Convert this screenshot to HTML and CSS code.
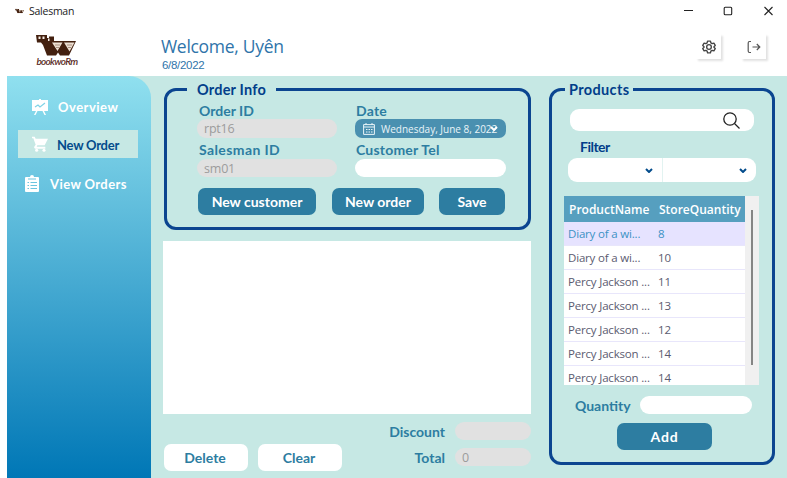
FILE: index.html
```html
<!DOCTYPE html>
<html lang="en">
<head>
<meta charset="utf-8">
<title>Salesman</title>
<link rel="stylesheet" href="styles.css">
</head>
<body>
<svg class="defs" width="0" height="0">
  <symbol id="mark" viewBox="0 0 40 21">
    <path fill="#43200f" d="M0 0h11v3h2V1.500h5V6h22l-7 14.500h-9l-2-3-2 3H11L7 10 5 7.500H1z"/>
    <path fill="#f7eee6" d="M2.500 1.500h2V4h-2zM6.500 1.500h2V4h-2zM12 3.500h1.500V6H12z"/>
    <path fill="#ecdfd2" d="M16 7.500h10.500l-5 8.500zM28 7.500h10.500l-5 9z"/>
    <path stroke="#7c5a46" stroke-width=".6" d="M19 10h5M20 12.500h3M31 10h5M32 12.500h3"/>
  </symbol>
</svg>
<header class="titlebar">
  <svg class="app-icon" viewBox="0 0 40 21"><use href="#mark"/></svg>
  <span class="app-name">Salesman</span>
  <svg class="win-controls" viewBox="0 0 90 12" fill="none" stroke="#222" stroke-width="1.100">
    <path d="M1 5.500h9M81.500 2l8 8M89.500 2l-8 8"/><rect x="41.200" y="2.200" width="7.500" height="7.500" rx="1"/>
  </svg>
</header>
<section class="banner">
  <div class="logo"><svg viewBox="0 0 40 21"><use href="#mark"/></svg><span>bookwoRm</span></div>
  <div class="greeting"><h1>Welcome, Uyên</h1><p>6/8/2022</p></div>
  <div class="tools">
    <button class="tool"><svg viewBox="0 0 24 24" fill="none" stroke="#444" stroke-width="2.300" stroke-linejoin="round"><circle cx="12" cy="12" r="4"/><path d="M9.500 2h5l.7 3 2.200 1.200 3-.9 2.300 4-2.200 2.200v1l2.200 2.200-2.300 4-3-.9-2.200 1.200-.7 3h-5l-.7-3-2.200-1.200-3 .9-2.300-4 2.200-2.200v-1L1.300 9.300l2.300-4 3 .9L8.800 5z"/></svg></button>
    <button class="tool"><svg viewBox="0 0 14 14" fill="none" stroke="#555" stroke-width="1.200"><path d="M4 1.500H2.500Q1.200 1.500 1.200 3v8q0 1.500 1.300 1.500H4M5.500 7h7M9.800 4l3 3-3 3"/></svg></button>
  </div>
</section>
<div class="workspace">
  <nav class="sidebar">
    <a class="item overview"><svg viewBox="0 0 16 16"><path fill="#fff" d="M0 1h7V0h2v1h7v11h-4l2 4h-1.500l-2-4h-5l-2 4H2l2-4H0z"/><path d="M3 8l3-2 2 2 5-4" fill="none" stroke="#80d3e6" stroke-width="1.200"/></svg><span>Overview</span></a>
    <a class="item current"><svg viewBox="0 0 24 24" fill="#fff"><path d="M0 1h4l1.500 3H24l-5 10H8l-1 2h13v3H5q-3-1-1-4l1.500-2L2 3.500H0z"/><circle cx="7" cy="21.500" r="2.300"/><circle cx="18" cy="21.500" r="2.300"/></svg><span>New Order</span></a>
    <a class="item view"><svg viewBox="0 0 14 17"><path fill="#fff" d="M1 2h4q0-2 2-2t2 2h4q1 0 1 1v13q0 1-1 1H1q-1 0-1-1V3q0-1 1-1z"/><path d="M3 4h8M2.500 7.500H4M5.500 7.500H12M2.500 10.500H4M5.500 10.500H12M2.500 13.500H4M5.500 13.500H12" stroke="#6cc5df" stroke-width="1"/></svg><span>View Orders</span></a>
  </nav>
  <main class="order">
    <fieldset class="panel info">
      <legend>Order Info</legend>
      <div class="fields">
        <label class="field"><span>Order ID</span><span class="box off">rpt16</span></label>
        <label class="field"><span>Date</span><span class="box date"><svg viewBox="0 0 12 12" fill="none" stroke="#e9f4f8"><path d="M.6 1.600h10.800v9.800H.6zM.6 4h10.800M3 0v2M9 0v2"/><path d="M3 6.500h6.500M3 9h6.500" stroke-dasharray="1.500 1"/></svg><span class="date-text">Wednesday, June 8, 2022</span><svg class="caret" viewBox="0 0 8 5"><path d="M1 1l3 3 3-3"/></svg></span></label>
        <label class="field"><span class="wide">Salesman ID</span><span class="box off">sm01</span></label>
        <label class="field"><span>Customer Tel</span><span class="box"></span></label>
      </div>
      <div class="actions"><button class="btn b1">New customer</button><button class="btn b2">New order</button><button class="btn b3">Save</button></div>
    </fieldset>
    <div class="lines"></div>
    <footer class="summary">
      <div class="edit"><button class="btn light">Delete</button><button class="btn light">Clear</button></div>
      <div class="totals"><span>Discount</span><span class="box off"></span><span>Total</span><span class="box off">0</span></div>
    </footer>
  </main>
  <aside>
    <fieldset class="panel products">
      <legend>Products</legend>
      <div class="search"><svg viewBox="0 0 17 17" fill="none" stroke="#222" stroke-width="1.300"><circle cx="7" cy="7" r="6.200"/><path d="M11.500 11.500l5 5"/></svg></div>
      <div class="filter-label">Filter</div>
      <div class="filters"><span><svg class="caret" viewBox="0 0 8 5"><path d="M1 1l3 3 3-3"/></svg></span><span><svg class="caret" viewBox="0 0 8 5"><path d="M1 1l3 3 3-3"/></svg></span></div>
      <div class="grid">
        <div class="rows">
          <div class="row head"><span>ProductName</span><span>StoreQuantity</span></div>
          <div class="row picked"><span>Diary of a wi...</span><span>8</span></div>
          <div class="row"><span>Diary of a wi...</span><span>10</span></div>
          <div class="row"><span>Percy Jackson ...</span><span>11</span></div>
          <div class="row"><span>Percy Jackson ...</span><span>13</span></div>
          <div class="row"><span>Percy Jackson ...</span><span>12</span></div>
          <div class="row"><span>Percy Jackson ...</span><span>14</span></div>
          <div class="row"><span>Percy Jackson ...</span><span>14</span></div>
        </div>
        <div class="scroll"><div class="thumb"></div></div>
      </div>
      <div class="quantity"><span>Quantity</span><span class="box"></span></div>
      <button class="btn add">Add</button>
    </fieldset>
  </aside>
</div>
</body>
</html>
```
FILE: styles.css
```css
* { box-sizing: border-box; }
body { margin: 0; width: 787px; height: 478px; overflow: hidden; background: #fff; font-family: "Open Sans", "Noto Sans", sans-serif; }
button { font: inherit; border: 0; padding: 0; }
.defs { display: block; }
.titlebar { display: flex; align-items: center; height: 22px; padding: 0 14px 0 15px; }
.app-icon { width: 9px; height: 6px; }
.app-name { margin-left: 5px; font-size: 10.500px; line-height: 20px; color: #222; letter-spacing: -.25px; }
.win-controls { width: 90px; height: 12px; margin-left: auto; }
.banner { display: flex; height: 54px; padding-left: 34px; }
.logo { width: 46px; padding-top: 13px; text-align: center; }
.logo svg { display: block; width: 40px; height: 21px; margin-left: 2px; }
.logo span { display: block; font: italic 600 10px/11px Lato, sans-serif; color: #5a2b24; letter-spacing: -.7px; white-space: nowrap; }
.greeting { margin-left: 81px; padding-top: 12px; color: #2f74aa; }
h1 { margin: 0; font-size: 17.500px; line-height: 24px; font-weight: 400; letter-spacing: -.3px; }
.greeting p { margin: 0 0 0 1px; font: 11.500px/14px "Liberation Sans", sans-serif; letter-spacing: -.3px; }
.tools { display: flex; gap: 20px; margin-left: auto; padding: 12px 21px 0 0; }
.tool { display: flex; align-items: center; justify-content: center; width: 25px; height: 25px; background: #fff; box-shadow: 2px 2px 2px #e2e2e2; }
.tool svg { width: 14px; height: 14px; }
.workspace { display: flex; height: 402px; margin-left: 7px; background: #c6e8e4; font-family: Lato, sans-serif; font-weight: 700; }
.sidebar { width: 144px; padding-top: 17px; border-top-right-radius: 22px; background: linear-gradient(#90e0ef, #0077b6); color: #fff; font-size: 13px; }
.item { display: flex; align-items: center; height: 28px; margin: 0 13px 0 11px; }
.item svg { width: 16px; height: 16px; flex: none; }
.overview { padding-left: 14px; letter-spacing: .5px; }
.overview span { margin-left: 10px; }
.current { margin-top: 9px; padding-left: 14px; background: #c6e8e4; color: #034c8c; letter-spacing: -.25px; }
.current span { margin-left: 9px; padding-top: 2px; }
.view { margin-top: 11px; padding-left: 7px; letter-spacing: .4px; }
.view svg { width: 14px; height: 17px; }
.view span { margin-left: 11px; padding-top: 2px; }
.order { width: 368px; margin-left: 12px; padding-top: 4px; }
.panel { min-width: 0; margin: 0; padding: 0; border: 3px solid #0b4590; border-radius: 12px; color: #2d7da1; }
.info { width: 367px; height: 150px; margin-left: 1px; }
legend { height: 19px; padding: 0 10px; font-size: 14.500px; line-height: 19px; color: #023e8a; letter-spacing: .2px; }
.info legend { margin-left: 20px; }
.fields { display: grid; grid-template-columns: 140px 151px; column-gap: 18px; padding-left: 30px; }
.field { display: block; }
.field > span:first-child { display: block; height: 21px; padding: 3px 0 0 2px; font-size: 14px; line-height: 18px; white-space: nowrap; }
.field > .wide { letter-spacing: .4px; }
.field:nth-child(-n+2) > span:first-child { height: 20px; }
.field:nth-child(even) > span:first-child { padding-left: 1px; letter-spacing: .2px; }
.box { display: flex; align-items: center; height: 18px; border-radius: 9px; background: #fff; font-family: "Open Sans", sans-serif; font-weight: 400; }
.box.off { background: #e1e1e1; color: #9c9c9c; padding-left: 7px; font-size: 12.500px; letter-spacing: -.2px; }
.field:nth-child(-n+2) .box { height: 19px; }
.box.date { padding: 0 8px; border-radius: 7px; background: #4a90b0; color: #e9f4f8; }
.date svg:first-child { width: 12px; height: 12px; }
.date-text { margin-left: 6px; width: 115px; font-size: 10px; white-space: nowrap; }
.caret { width: 8px; height: 5px; fill: none; stroke: #034c8c; stroke-width: 2; flex: none; }
.date .caret { stroke: #fff; margin-left: -6px; }
.actions { display: flex; padding: 11px 0 0 31px; }
.btn { height: 27px; border-radius: 7px; background: #2d7da1; color: #fff; font-weight: 700; font-size: 14px; line-height: 27px; }
.b1 { width: 118px; }
.b2 { width: 92px; margin-left: 16px; }
.b3 { width: 66px; margin-left: 15px; }
.lines { height: 173px; margin-top: 11px; background: #fff; }
.summary { display: flex; justify-content: space-between; color: #2d7da1; font-size: 14px; }
.edit { display: flex; gap: 10px; padding: 30px 0 0 1px; }
.light { width: 84px; padding-right: 2px; background: #fff; color: #2d7da1; }
.totals { display: grid; grid-template-columns: auto 76px; grid-auto-rows: 18px; gap: 8px 10px; align-items: center; justify-items: end; padding-top: 8px; }
.totals .box { width: 76px; }
aside { margin-left: 18px; padding-top: 4px; }
.products { width: 226px; height: 385px; }
.products legend { margin-left: 13px; padding: 0 4px; letter-spacing: .35px; }
.search { display: flex; align-items: center; justify-content: flex-end; width: 184px; height: 22px; margin: 10px 0 0 18px; padding-right: 14px; border-radius: 9px; background: #fff; }
.search svg { width: 17px; height: 17px; }
.filter-label { height: 27px; padding: 6px 0 0 28px; color: #023e8a; font-size: 14px; line-height: 19px; letter-spacing: -.5px; }
.filters { display: flex; width: 188px; height: 24px; margin-left: 16px; border-radius: 9px; background: #fff; }
.filters > span { display: flex; flex: 1; align-items: center; justify-content: flex-end; padding-right: 9px; }
.filters > span:first-child { border-right: 1px solid #e2f3f1; }
.grid { display: flex; width: 195px; height: 189px; margin: 14px 0 0 12px; overflow: hidden; background: #fff; font-family: "Open Sans", sans-serif; font-weight: 400; font-size: 11.500px; color: #5b5b70; }
.rows { width: 181px; letter-spacing: -.18px; }
.row { display: flex; height: 24px; padding-left: 4px; border-bottom: 1px solid #e8e6fb; line-height: 24px; white-space: nowrap; }
.row span:first-child { width: 90px; }
.head { height: 26px; padding-left: 5px; border: 0; background: #569fbf; color: #fff; font-size: 12px; font-weight: 600; line-height: 27px; letter-spacing: 0; }
.picked { background: #e6e3ff; color: #3c92c4; }
.scroll { width: 14px; padding: 14px 0 0 6px; background: #f0f0f0; }
.thumb { width: 2px; height: 155px; background: #858585; }
.quantity { display: flex; align-items: center; padding: 11px 0 0 23px; font-size: 14px; }
.quantity > span:first-child { width: 65px; }
.quantity .box { width: 112px; }
.add { display: block; width: 95px; margin: 9px 0 0 65px; letter-spacing: .8px; }
```
